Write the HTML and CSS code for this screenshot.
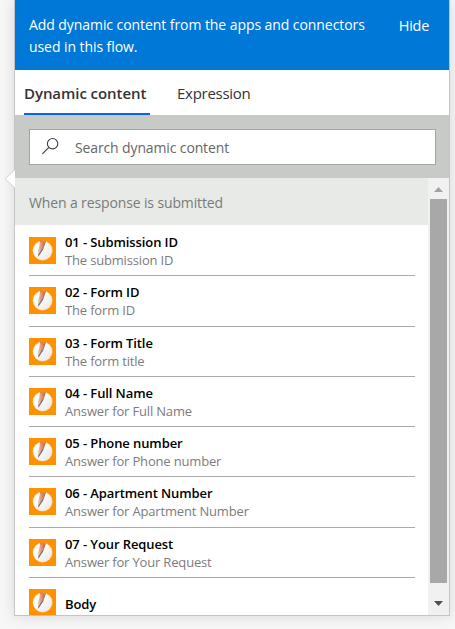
FILE: index.html
```html
<!DOCTYPE html>
<html lang="en">
<head>
<meta charset="utf-8">
<title>Dynamic content</title>
<link rel="stylesheet" href="styles.css">
</head>
<body>
<svg class="defs" width="0" height="0" aria-hidden="true">
  <defs>
    <linearGradient id="disc" x1="0" y1="0" x2="1" y2="1"><stop offset=".3" stop-color="#fff"/><stop offset="1" stop-color="#e6e6e6"/></linearGradient>
    <linearGradient id="wood" x1="0" y1="0" x2="1" y2="0"><stop offset="0" stop-color="#efc0a8"/><stop offset=".55" stop-color="#d98a64"/><stop offset="1" stop-color="#8a5a4c"/></linearGradient>
  </defs>
  <symbol id="pencil" viewBox="0 0 27 27">
    <rect width="27" height="27" fill="#ff9100"/>
    <circle cx="13.6" cy="13.5" r="10" fill="#ffc477"/>
    <circle cx="13.6" cy="13.5" r="9.4" fill="url(#disc)"/>
    <path d="M11.5 3.6 L16.8 4.4 L14.5 11.8 L9.3 19.8 L9.4 13Z" fill="url(#wood)"/>
    <path d="M9.4 12.8 L12 14 L9.3 19.8Z" fill="#d6c6bc"/>
    <path d="M14.5 11.8 L9.3 19.8 L9.4 17.6 L13.3 11.5Z" fill="#77717a"/>
    <path d="M11.4 3.2 L16.9 3.8 L16.3 6 L10.8 5.2Z" fill="#e8803a"/>
  </symbol>
</svg>
<main class="panel">
  <svg class="callout" viewBox="0 0 11 20"><path d="M11 0.5 L1.2 10 L11 19" fill="#fff" stroke="#d2d2d2"/></svg>
  <header class="banner">
    <p class="banner-text"><span class="line-one">Add dynamic content from the apps and connectors</span><br><span class="line-two">used in this flow.</span></p>
    <span class="hide">Hide</span>
  </header>
  <nav class="tabs">
    <span class="tab active">Dynamic content</span>
    <span class="tab">Expression</span>
  </nav>
  <div class="search">
    <div class="search-box">
      <svg width="18" height="18" viewBox="0 0 18 18" fill="none" stroke="#403c4c" stroke-width="1.1"><circle cx="10.6" cy="6.7" r="5.2"/><path d="M6.9 10.4 L.4 16.9"/></svg>
      <span>Search dynamic content</span>
    </div>
  </div>
  <div class="body">
    <section class="list">
      <h2 class="group"><span>When a response is submitted</span></h2>
      <div class="item"><svg class="icon"><use href="#pencil"/></svg><div><div class="name">01 - Submission ID</div><div class="desc">The submission ID</div></div></div>
      <div class="item"><svg class="icon"><use href="#pencil"/></svg><div><div class="name">02 - Form ID</div><div class="desc">The form ID</div></div></div>
      <div class="item"><svg class="icon"><use href="#pencil"/></svg><div><div class="name">03 - Form Title</div><div class="desc">The form title</div></div></div>
      <div class="item"><svg class="icon"><use href="#pencil"/></svg><div><div class="name">04 - Full Name</div><div class="desc">Answer for Full Name</div></div></div>
      <div class="item"><svg class="icon"><use href="#pencil"/></svg><div><div class="name">05 - Phone number</div><div class="desc">Answer for Phone number</div></div></div>
      <div class="item"><svg class="icon"><use href="#pencil"/></svg><div><div class="name">06 - Apartment Number</div><div class="desc">Answer for Apartment Number</div></div></div>
      <div class="item"><svg class="icon"><use href="#pencil"/></svg><div><div class="name">07 - Your Request</div><div class="desc">Answer for Your Request</div></div></div>
      <div class="item"><svg class="icon"><use href="#pencil"/></svg><div><div class="name single">Body</div></div></div>
    </section>
    <div class="scrollbar">
      <svg width="9" height="5" viewBox="0 0 9 5"><path d="M0 5 L4.5 0 L9 5Z" fill="#a3a3a3"/></svg>
      <div class="thumb"></div>
      <svg width="9" height="5" viewBox="0 0 9 5"><path d="M0 0 L9 0 L4.5 5Z" fill="#505050"/></svg>
    </div>
  </div>
</main>
</body>
</html>
```

FILE: styles.css
```css
* { box-sizing: border-box; }
body {
  margin: 0;
  height: 629px;
  overflow: hidden;
  background: #f7f7f7;
  font-family: "Open Sans", "Noto Sans", sans-serif;
  font-size: 14px;
  white-space: nowrap;
}
.defs { position: absolute; }
.panel {
  position: relative;
  width: 436px;
  height: 616px;
  margin-left: 14px;
  border: 1px solid #c4c4c4;
  border-top: 0;
  background: #fff;
  display: flex;
  flex-direction: column;
  box-shadow: 0 0 14px rgba(0, 0, 0, .13);
}
.callout { position: absolute; left: -11px; top: 169px; width: 11px; height: 20px; }
.banner {
  height: 70px;
  flex: none;
  padding: 14px 20px 0 14px;
  display: flex;
  justify-content: space-between;
  background: #0078d7;
  color: #fff;
  line-height: 22px;
}
.banner-text { margin: 0; }
.line-one { letter-spacing: -.07px; }
.line-two { letter-spacing: -.07px; }
.hide { font-size: 14.5px; letter-spacing: -.3px; line-height: 23px; }
.tabs {
  height: 45px;
  flex: none;
  padding-left: 9px;
  display: flex;
  gap: 18px;
  font-size: 15px;
  line-height: 47px;
  color: #333;
}
.tab { padding: 0 9px; letter-spacing: -.27px; }
.tab.active {
  width: 126px;
  padding: 0;
  border-bottom: 2px solid #0b62f5;
  font-weight: 540;
  letter-spacing: -.06px;
}
.search { height: 63px; flex: none; padding: 14px 13px 13px 14px; background: #c8cac7; }
.search-box {
  height: 36px;
  border: 1px solid #a4a6a4;
  background: #fff;
  padding-left: 12px;
  display: flex;
  align-items: center;
  gap: 15px;
  color: #666;
  letter-spacing: -.13px;
}
.search-box svg { margin-top: -3px; }
.body { flex: 1; min-height: 0; display: flex; }
.list { width: 413px; overflow: hidden; }
.group {
  margin: 0;
  height: 47px;
  padding-left: 14px;
  background: #e7eae6;
  color: #7a7a7a;
  font-size: 14px;
  font-weight: 400;
  line-height: 49px;
  letter-spacing: -.13px;
}
.item {
  height: 50.3px;
  margin: 0 13px 0 14px;
  display: flex;
  gap: 9px;
  box-shadow: 0 1px 0 #aaa;
}
.icon { width: 27px; height: 27px; margin-top: 12px; flex: none; }
.name {
  margin-top: 8px;
  line-height: 18px;
  font-size: 13px;
  font-weight: 600;
  color: #000;
  letter-spacing: -.1px;
}
.name.single { margin-top: 15px; line-height: 24px; }
.desc { line-height: 18px; font-size: 13px; color: #7c7c7c; letter-spacing: -.17px; }
.scrollbar {
  width: 21px;
  background: #f1f1f1;
  display: flex;
  flex-direction: column;
  align-items: center;
  padding-top: 9px;
}
.thumb { width: 17px; height: 384px; margin: 7px 0 18px; background: #a8a8a8; }
```
